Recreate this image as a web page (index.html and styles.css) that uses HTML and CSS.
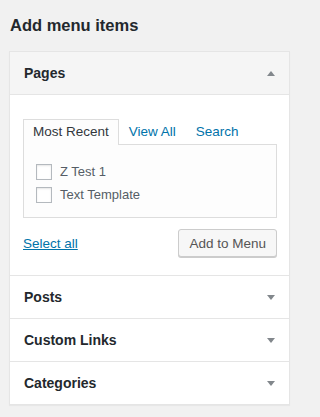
FILE: index.html
```html
<!DOCTYPE html>
<html lang="en">
<head>
<meta charset="utf-8">
<title>Add menu items</title>
<link rel="stylesheet" href="styles.css">
</head>
<body>
<h2 class="title">Add menu items</h2>
<div class="box">
  <div class="section open">
    <div class="sec-head">
      <span class="sec-title">Pages</span>
      <svg class="arrow" width="8" height="5" viewBox="0 0 8 5"><polygon points="0,5 4,0 8,5" fill="#82878c"/></svg>
    </div>
    <div class="sec-body">
      <div class="tabs">
        <span class="tab active">Most Recent</span>
        <a class="tab" href="#">View All</a>
        <a class="tab" href="#">Search</a>
      </div>
      <div class="panel">
        <label class="item"><span class="cb"></span><span>Z Test 1</span></label>
        <label class="item"><span class="cb"></span><span>Text Template</span></label>
      </div>
      <div class="actions">
        <a class="select-all" href="#">Select all</a>
        <button class="btn" type="button">Add to Menu</button>
      </div>
    </div>
  </div>
  <div class="section">
    <div class="sec-head closed">
      <span class="sec-title">Posts</span>
      <svg class="arrow" width="8" height="5" viewBox="0 0 8 5"><polygon points="0,0 8,0 4,5" fill="#82878c"/></svg>
    </div>
  </div>
  <div class="section">
    <div class="sec-head closed">
      <span class="sec-title">Custom Links</span>
      <svg class="arrow" width="8" height="5" viewBox="0 0 8 5"><polygon points="0,0 8,0 4,5" fill="#82878c"/></svg>
    </div>
  </div>
  <div class="section">
    <div class="sec-head closed">
      <span class="sec-title">Categories</span>
      <svg class="arrow" width="8" height="5" viewBox="0 0 8 5"><polygon points="0,0 8,0 4,5" fill="#82878c"/></svg>
    </div>
  </div>
</div>
</body>
</html>
```
FILE: styles.css
```css
* { box-sizing: border-box; }
html, body { margin: 0; padding: 0; }
body {
  background: #f1f1f1;
  font-family: "Liberation Sans", Arial, sans-serif;
  color: #23282d;
  width: 299px;
  height: 417px;
  overflow: hidden;
}
.title {
  margin: 0;
  padding: 13px 0 0 10px;
  font-size: 16.5px;
  line-height: 24px;
  font-weight: 700;
  color: #23282d;
}
.box {
  margin: 14px 0 0 9px;
  width: 281px;
  background: #fff;
  border: 1px solid #e5e5e5;
  box-shadow: 0 1px 1px rgba(0,0,0,0.04);
}
.section + .section { border-top: 1px solid #e5e5e5; }
.sec-head {
  height: 42px;
  display: flex;
  align-items: center;
  justify-content: space-between;
  padding: 0 14px 0 14px;
  background: #fff;
}
.open .sec-head {
  background: #f5f5f5;
  border-bottom: 1px solid #e5e5e5;
  height: 43px;
}
.sec-title {
  font-size: 14px;
  font-weight: 700;
  line-height: 42px;
  color: #23282d;
}
.arrow { display: block; margin-top: 1px; }
.sec-body {
  padding: 24px 12px 18px 13px;
}
.tabs {
  display: flex;
  align-items: flex-end;
  height: 26px;
  margin-bottom: -1px;
  position: relative;
  z-index: 1;
}
.tab {
  font-size: 13.5px;
  line-height: 24px;
  height: 26px;
  padding: 1px 10px 0;
  color: #0073aa;
  text-decoration: none;
  white-space: nowrap;
}
.tab.active {
  color: #32373c;
  background: #fdfdfd;
  border: 1px solid #dddddd;
  border-bottom: none;
  padding: 0 9px;
  line-height: 24px;
}
.panel {
  border: 1px solid #dddddd;
  background: #fdfdfd;
  padding: 15px 12px 11px 12px;
}
.item {
  display: flex;
  align-items: center;
  height: 23px;
  font-size: 13px;
  color: #555d66;
}
.cb {
  width: 16px;
  height: 16px;
  border: 1px solid #b4b9be;
  background: #fff;
  box-shadow: inset 0 1px 2px rgba(0,0,0,0.1);
  margin-right: 8px;
  flex: none;
}
.actions {
  margin-top: 11px;
  display: flex;
  align-items: center;
  justify-content: space-between;
  height: 28px;
}
.select-all {
  font-size: 13.5px;
  color: #0073aa;
  text-decoration: underline;
  margin-top: 1px;
}
.btn {
  height: 28px;
  padding: 0 10px;
  font-family: "Liberation Sans", Arial, sans-serif;
  font-size: 13.5px;
  color: #555555;
  background: #f7f7f7;
  border: 1px solid #cccccc;
  border-radius: 3px;
  box-shadow: 0 1px 0 #cccccc;
  white-space: nowrap;
}
```
